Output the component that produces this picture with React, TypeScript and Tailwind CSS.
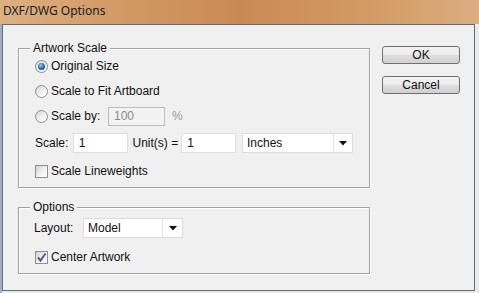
import React from "react";

const font = { fontFamily: '"Liberation Sans", Arial, sans-serif' };

function Radio({ checked }: { checked?: boolean }) {
  return (
    <span className="flex h-[13px] w-[13px] shrink-0 items-center justify-center rounded-full border border-[#8e8f8f] bg-[linear-gradient(135deg,#d2d2d2,#f4f4f4_60%,#ffffff)]">
      {checked && (
        <span className="h-[7px] w-[7px] rounded-full bg-[radial-gradient(circle_at_40%_35%,#9ad0f4,#2a64a8_55%,#123c70)]" />
      )}
    </span>
  );
}

function Check({ checked }: { checked?: boolean }) {
  return (
    <span className="flex h-[13px] w-[13px] shrink-0 items-center justify-center border border-[#8e8f8f] bg-[linear-gradient(135deg,#d2d2d2,#f4f4f4_60%,#ffffff)]">
      {checked && (
        <svg width="11" height="11" viewBox="0 0 11 11">
          <path d="M2 5.5 L4.5 8.5 L9.5 1.5" fill="none" stroke="#4a5d8c" strokeWidth="2" />
        </svg>
      )}
    </span>
  );
}

function Select({ value, w, arrowW }: { value: string; w: string; arrowW: string }) {
  return (
    <div className={`flex h-[20px] ${w} items-stretch border border-[#dcdcdc] bg-white`}>
      <span className="flex flex-1 items-center pl-[4px] leading-none">{value}</span>
      <span className={`flex ${arrowW} items-center justify-center border-l border-[#e4e4e4]`}>
        <svg width="8" height="5" viewBox="0 0 8 5">
          <path d="M0 0 H8 L4 4.5 Z" fill="#111" />
        </svg>
      </span>
    </div>
  );
}

function Group({ title, className, children }: { title: string; className: string; children: React.ReactNode }) {
  return (
    <div className={`relative border border-[#a3a3a3] shadow-[1px_1px_0_#fff,inset_1px_1px_0_#fff] ${className}`}>
      <span className="absolute -top-[8px] left-[11px] bg-[#f0f0f0] px-[3px] leading-[14px]">{title}</span>
      {children}
    </div>
  );
}

function Button({ label, className }: { label: string; className?: string }) {
  return (
    <div
      className={`flex h-[18px] w-[78px] items-center justify-center rounded-[3px] border border-[#707070] bg-[linear-gradient(#f3f3f3_0%,#ebebeb_50%,#dedede_50%,#d0d0d0_100%)] leading-none ${className ?? ""}`}
    >
      {label}
    </div>
  );
}

export default function App() {
  return (
    <div className="relative h-[293px] w-[479px] overflow-hidden bg-[#e8ebed] text-[12px] text-[#111]" style={font}>
      <div
        className="flex h-[24px] items-start bg-[linear-gradient(90deg,#ddb084_0%,#d39c66_22%,#c98a52_50%,#d29a62_75%,#dcad80_100%)] pl-[3px] pt-[2px] text-[12px] text-[#1a1a1a]"
        style={{ fontFamily: '"Noto Sans", "Open Sans", sans-serif' }}
      >
        DXF/DWG Options
      </div>
      <div className="absolute left-0 top-[24px] h-[269px] w-[2px] bg-[#9fb1c0]" />
      <div className="ml-[2px] flex h-[267px] w-[473px] border border-[#6b6b6b] bg-[#f0f0f0]">
        <div className="ml-[15px] flex flex-col">
          <Group title="Artwork Scale" className="mt-[23px] h-[140px] w-[352px] px-[16px] pt-[7px]">
            <div className="flex h-[20px] items-center gap-[3px]">
              <Radio checked />
              <span>Original Size</span>
            </div>
            <div className="mt-[5px] flex h-[20px] items-center gap-[3px]">
              <Radio />
              <span>Scale to Fit Artboard</span>
            </div>
            <div className="mt-[5px] flex h-[20px] items-center gap-[3px]">
              <Radio />
              <span className="w-[54px]">Scale by:</span>
              <div className="flex h-[19px] w-[57px] items-center border border-[#bdbdbd] bg-[#f2f2f2] pl-[5px] text-[#8a8a8a]">
                100
              </div>
              <span className="ml-[4px] text-[#9a9a9a]">%</span>
            </div>
            <div className="mt-[7px] flex h-[20px] items-center">
              <span className="w-[38px]">Scale:</span>
              <div className="flex h-[20px] w-[55px] items-center border border-[#dedede] bg-white pl-[5px]">1</div>
              <span className="ml-[5px] w-[49px]">Unit(s) =</span>
              <div className="flex h-[20px] w-[55px] items-center border border-[#dedede] bg-white pl-[5px]">1</div>
              <div className="ml-[6px]">
                <Select value="Inches" w="w-[111px]" arrowW="w-[19px]" />
              </div>
            </div>
            <div className="mt-[8px] flex h-[20px] items-center gap-[3px]">
              <Check />
              <span>Scale Lineweights</span>
            </div>
          </Group>
          <Group title="Options" className="mt-[19px] h-[67px] w-[352px] px-[16px] pt-[10px]">
            <div className="flex h-[20px] items-center">
              <span className="-ml-[1px] w-[49px]">Layout:</span>
              <Select value="Model" w="w-[100px]" arrowW="w-[20px]" />
            </div>
            <div className="mt-[9px] flex h-[20px] items-center gap-[3px]">
              <Check checked />
              <span>Center Artwork</span>
            </div>
          </Group>
        </div>
        <div className="ml-[12px] mt-[21px] flex flex-col">
          <Button label="OK" />
          <Button label="Cancel" className="mt-[12px]" />
        </div>
      </div>
    </div>
  );
}
